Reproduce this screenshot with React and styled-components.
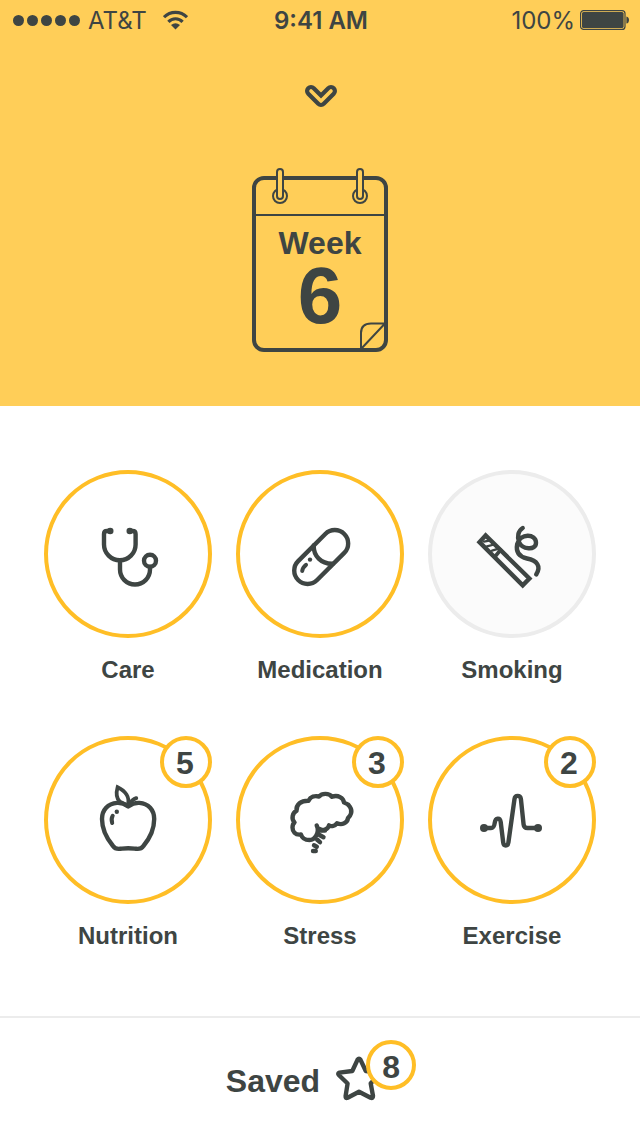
import React from 'react';
import styled, { createGlobalStyle, ThemeProvider } from 'styled-components';

const theme = {
  color: {
    ink: '#3e4543',
    sun: '#ffce58',
    ring: '#ffbe26',
    line: '#ececec',
    muted: '#fbfbfb',
  },
};

const GlobalStyle = createGlobalStyle`
  * {
    box-sizing: border-box;
  }

  body {
    margin: 0;
    background: #fff;
    color: ${theme.color.ink};
    font-family: 'Liberation Sans', Arial, sans-serif;
  }
`;

const Page = styled.div`
  display: flex;
  flex-direction: column;
  min-height: 100vh;
`;

const Header = styled.header`
  display: flex;
  flex-direction: column;
  align-items: center;
  padding-bottom: 54px;
  background: ${({ theme }) => theme.color.sun};
`;

const StatusRow = styled.div`
  display: grid;
  grid-template-columns: 1fr auto 1fr;
  align-items: center;
  width: 100%;
  height: 40px;
  padding: 0 11px 0 13px;
  font-family: Inter, sans-serif;
  font-size: 24px;
  line-height: 38px;
`;

const StatusGroup = styled.div`
  display: flex;
  align-items: center;
  justify-content: ${({ $end }) => ($end ? 'flex-end' : 'flex-start')};
  gap: ${({ $end }) => ($end ? '5px' : '8px')};
`;

const StatusText = styled.span`
  padding-top: 2px;
`;

const Signal = styled.div`
  display: flex;
  gap: 3px;
`;

const SignalDot = styled.span`
  width: 11px;
  height: 11px;
  border-radius: 50%;
  background: ${({ theme }) => theme.color.ink};
`;

const Wifi = styled.svg`
  margin-left: 8px;
`;

const Time = styled.time`
  padding-top: 2px;
  font-weight: 600;
`;

const CollapseButton = styled.button`
  display: flex;
  margin-top: 41px;
  padding: 0;
  border: none;
  background: none;
  cursor: pointer;
`;

const CalendarSheet = styled.section`
  position: relative;
  width: 136px;
  height: 176px;
  margin-top: 65px;
  border: 4px solid ${({ theme }) => theme.color.ink};
  border-radius: 12px;
  text-align: center;
  font-weight: bold;
`;

const CalendarTop = styled.div`
  height: 36px;
  border-bottom: 2px solid ${({ theme }) => theme.color.ink};
`;

const CalendarUnit = styled.div`
  padding-top: 8px;
  font-size: 32px;
  line-height: 38px;
`;

const CalendarNumber = styled.div`
  font-size: 80px;
  line-height: 68px;
`;

const CalendarArt = styled.svg`
  position: absolute;
  top: -12px;
  left: -4px;
`;

const Main = styled.main`
  flex: 1;
  padding: 64px 44px 0;
`;

const TopicList = styled.ul`
  display: grid;
  grid-template-columns: repeat(3, minmax(0, 168px));
  justify-content: center;
  gap: 50px 24px;
  margin: 0;
  padding: 0;
  list-style: none;
`;

const TopicButton = styled.button`
  display: block;
  width: 100%;
  padding: 0;
  border: none;
  background: none;
  color: inherit;
  font: inherit;
  font-size: 24px;
  font-weight: bold;
  line-height: 32px;
  text-align: center;
  cursor: pointer;
`;

const TopicCircle = styled.span`
  position: relative;
  display: flex;
  align-items: center;
  justify-content: center;
  aspect-ratio: 1;
  margin-bottom: 16px;
  border: 4px solid
    ${({ theme, $off }) => ($off ? theme.color.line : theme.color.ring)};
  border-radius: 50%;
  background: ${({ theme, $off }) => ($off ? theme.color.muted : '#fff')};
`;

const Badge = styled.span`
  position: absolute;
  top: ${({ $inset }) => ($inset ? '0' : '-4px')};
  right: ${({ $inset }) => ($inset ? '0' : '-4px')};
  width: ${({ $inset }) => ($inset ? '50px' : '52px')};
  height: ${({ $inset }) => ($inset ? '50px' : '52px')};
  padding-right: ${({ $inset }) => ($inset ? '0' : '2px')};
  border: 4px solid ${({ theme }) => theme.color.ring};
  border-radius: 50%;
  background: #fff;
  font-size: 32px;
  line-height: 46px;
  text-align: center;
`;

const Footer = styled.footer`
  display: flex;
  justify-content: center;
  padding: 22px 0 34px 2px;
  border-top: 2px solid ${({ theme }) => theme.color.line};
`;

const SavedLink = styled.a`
  display: flex;
  align-items: flex-end;
  gap: 14px;
  color: inherit;
  font-size: 32px;
  font-weight: bold;
  line-height: 38px;
  text-decoration: none;
`;

const SavedText = styled.span`
  padding-bottom: 2px;
`;

const SavedMark = styled.span`
  position: relative;
  display: flex;
  align-items: flex-end;
  width: 82px;
  height: 62px;
`;

const Icon = styled.svg.attrs({ viewBox: '0 0 80 80', 'aria-hidden': true })`
  width: 80px;
  height: 80px;
  fill: none;
  stroke: ${({ theme }) => theme.color.ink};
  stroke-width: 4.4;
  stroke-linecap: round;
  stroke-linejoin: round;

  .solid {
    fill: ${({ theme }) => theme.color.ink};
    stroke: none;
  }
`;

const CareIcon = () => (
  <Icon>
    <path d="M22 17H19Q16 17 16 20V30.5A15.8 15.8 0 0 0 47.6 30.5V20Q47.6 17 44.6 17H42" />
    <path d="M32 46.3V55.5A15 15 0 0 0 62 55.5V53" />
    <circle cx="62" cy="46.7" r="6" />
    <circle className="solid" cx="22.2" cy="17" r="3.3" />
    <circle className="solid" cx="41.8" cy="17" r="3.3" />
  </Icon>
);

const MedicationIcon = () => (
  <Icon>
    <rect
      x="-32.6"
      y="-13.4"
      width="65.2"
      height="26.8"
      rx="13.4"
      transform="translate(41.2 43) rotate(-45)"
    />
    <path d="M33.7 31.5C33.5 42 41 50 52.5 49.8" />
    <path d="M26 50.8Q22.6 53.4 22.2 57" strokeWidth="4" />
    <circle className="solid" cx="30" cy="45.6" r="2.2" />
  </Icon>
);

const SmokingIcon = () => (
  <Icon>
    <path
      d="M13.6 21.5L7.5 28.1L50.7 71.4L57.4 64.5Z"
      strokeLinejoin="miter"
    />
    <path d="M12 27.6L18.5 26.4M15 32.4L23 30.2M20 36.6L27.5 34.4" strokeWidth="2.2" />
    <path d="M28.5 36L23.5 42" strokeWidth="3.6" />
    <path d="M50.7 14C46 17 45 23 47 28C50 35.5 64 37 64 28.7C64 19.5 48 19 45.2 30C43.5 39 48 43 55 44.5C65 46.5 69.5 52 64.2 60.5" />
  </Icon>
);

const NutritionIcon = () => (
  <Icon>
    <path d="M40.2 26.5C36 23.5 32 22.7 29 22.9C20 23.5 14 30 14 39C14 50 20 60 25 66C28 70.3 31 68.8 34 68.6C38 68.2 42.4 68.2 46.4 68.6C49.4 68.8 52.4 70.3 55.4 66C60.4 60 66.2 50 66.2 39C66.2 30 60.4 23.5 51.4 22.9C48.4 22.7 44.4 23.5 40.2 26.5Z" />
    <path
      d="M29.6 7.2C27.8 13.5 28.8 18.8 32 21.8L39.7 25.5C42.5 17 37 10.8 29.6 7.2Z"
      strokeWidth="3.8"
      strokeLinejoin="miter"
    />
    <path d="M48.2 18.2C45.5 19 43.5 20.8 41.5 24.5" strokeWidth="4" />
    <path d="M24.7 35.8Q22.8 39 24.2 43" strokeWidth="4" />
    <circle className="solid" cx="28.8" cy="31.8" r="2.2" />
  </Icon>
);

const StressIcon = () => (
  <Icon>
    <path d="M36.7 45.5C40 52 35 60 29.5 60C25.5 60 22 58 21 54.5C15 55.5 12.5 51 12.5 47.5C12.5 45 13.3 43.5 14.5 42.5C11 38.5 12.5 33 16.5 30.8C16 24.5 21 20.5 28.5 20.7C30.5 16.5 35 15.5 39 16.5C42 13 49 13 52 16.8C58 14.5 63.5 18 64 22.5C69 24 72.5 29 71 33.5C70.3 36 69 37 68 38C67.5 43 62 45.5 57 43.2C55 46 51.5 46.7 49 45.3C48 48.5 45 50 42 50L38.5 48.5" />
    <path d="M38.5 50.5H45M39.5 55L43.5 57.2M37 59.5L40 62.2M34 65.3L36.8 66.8M33 71H35.8" />
  </Icon>
);

const ExerciseIcon = () => (
  <Icon>
    <path d="M12 48H19C21.6 48 22.2 46.5 22.7 43C23.4 37.4 28 37.4 28.7 42L31.2 62.5C31.7 66.4 35.9 66.4 36.4 62.5L42.5 19C43.1 14.8 48.3 14.8 48.9 19L51.6 44.5Q52 48 55.5 48H66" />
    <circle className="solid" cx="12" cy="48" r="4" />
    <circle className="solid" cx="66" cy="48" r="4" />
  </Icon>
);

const topics = [
  { name: 'Care', TopicIcon: CareIcon },
  { name: 'Medication', TopicIcon: MedicationIcon },
  { name: 'Smoking', TopicIcon: SmokingIcon, off: true },
  { name: 'Nutrition', TopicIcon: NutritionIcon, count: 5 },
  { name: 'Stress', TopicIcon: StressIcon, count: 3 },
  { name: 'Exercise', TopicIcon: ExerciseIcon, count: 2 },
];

const StatusBar = () => (
  <StatusRow>
    <StatusGroup>
      <Signal>
        {[1, 2, 3, 4, 5].map((n) => (
          <SignalDot key={n} />
        ))}
      </Signal>
      <StatusText>AT&amp;T</StatusText>
      <Wifi width="25" height="20" viewBox="0 0 25 20" aria-hidden="true">
        <g fill="none" stroke={theme.color.ink} strokeWidth="3.2">
          <path d="M1 7.2A16.2 16.2 0 0 1 24 7.2" />
          <path d="M5.4 11.8A9.8 9.8 0 0 1 19.6 11.8" />
        </g>
        <path d="M8 15Q12.5 11.4 17 15L12.5 19.4Z" fill={theme.color.ink} />
      </Wifi>
    </StatusGroup>
    <Time>9:41 AM</Time>
    <StatusGroup $end>
      <StatusText>100%</StatusText>
      <svg width="49" height="20" viewBox="0 0 49 20" aria-hidden="true">
        <rect
          x="0.6"
          y="0.6"
          width="44.4"
          height="18.8"
          rx="3"
          fill="none"
          stroke={theme.color.ink}
          strokeWidth="1.2"
        />
        <rect x="2" y="2" width="41.6" height="16" rx="1.6" fill={theme.color.ink} />
        <path d="M46.4 6.4Q49 7 49 10T46.4 13.6Z" fill={theme.color.ink} />
      </svg>
    </StatusGroup>
  </StatusRow>
);

const Calendar = () => (
  <CalendarSheet>
    <CalendarTop />
    <CalendarUnit>Week</CalendarUnit>
    <CalendarNumber>6</CalendarNumber>
    <CalendarArt
      width="136"
      height="184"
      viewBox="0 0 136 184"
      fill="none"
      stroke={theme.color.ink}
      strokeWidth="2"
      aria-hidden="true"
    >
      {[28, 108].map((x) => (
        <g key={x} fill={theme.color.sun}>
          <circle cx={x} cy="28" r="7" />
          <rect x={x - 3} y="1" width="6" height="30" rx="3" />
        </g>
      ))}
      <path d="M109 181V165Q109 155.5 119 155.5H133L109 181" />
    </CalendarArt>
  </CalendarSheet>
);

const Topic = ({ topic }) => {
  const { name, TopicIcon, count, off } = topic;
  return (
    <li>
      <TopicButton type="button">
        <TopicCircle $off={off}>
          <TopicIcon />
          {count ? <Badge>{count}</Badge> : null}
        </TopicCircle>
        {name}
      </TopicButton>
    </li>
  );
};

const App = () => (
  <ThemeProvider theme={theme}>
    <GlobalStyle />
    <Page>
      <Header>
        <StatusBar />
        <CollapseButton type="button" aria-label="Collapse">
          <svg
            width="40"
            height="30"
            viewBox="0 0 40 30"
            fill="none"
            strokeLinecap="round"
            strokeLinejoin="round"
          >
            <path d="M11 10L21 20L31 10" stroke={theme.color.ink} strokeWidth="12" />
            <path d="M11 10L21 20L31 10" stroke={theme.color.sun} strokeWidth="3.6" />
          </svg>
        </CollapseButton>
        <Calendar />
      </Header>
      <Main>
        <TopicList>
          {topics.map((topic) => (
            <Topic key={topic.name} topic={topic} />
          ))}
        </TopicList>
      </Main>
      <Footer>
        <SavedLink href="#saved">
          <SavedText>Saved</SavedText>
          <SavedMark>
            <svg width="50" height="48" viewBox="0 0 50 48" aria-hidden="true">
              <path
                d="M23.6 5.6Q25 3.6 26.4 5.6L31.8 17L44.6 18.6Q46.8 19.2 45.2 21L36.7 29.3L39 42Q39 44.8 36.6 43.8L25 37.7L13.6 43.8Q11.4 44.8 11.6 42L13.6 29.5L4.8 21Q3.4 19.2 5.4 18.6L18.3 17Z"
                fill="none"
                stroke={theme.color.ink}
                strokeWidth="4.4"
                strokeLinejoin="round"
              />
            </svg>
            <Badge $inset>8</Badge>
          </SavedMark>
        </SavedLink>
      </Footer>
    </Page>
  </ThemeProvider>
);

export default App;
